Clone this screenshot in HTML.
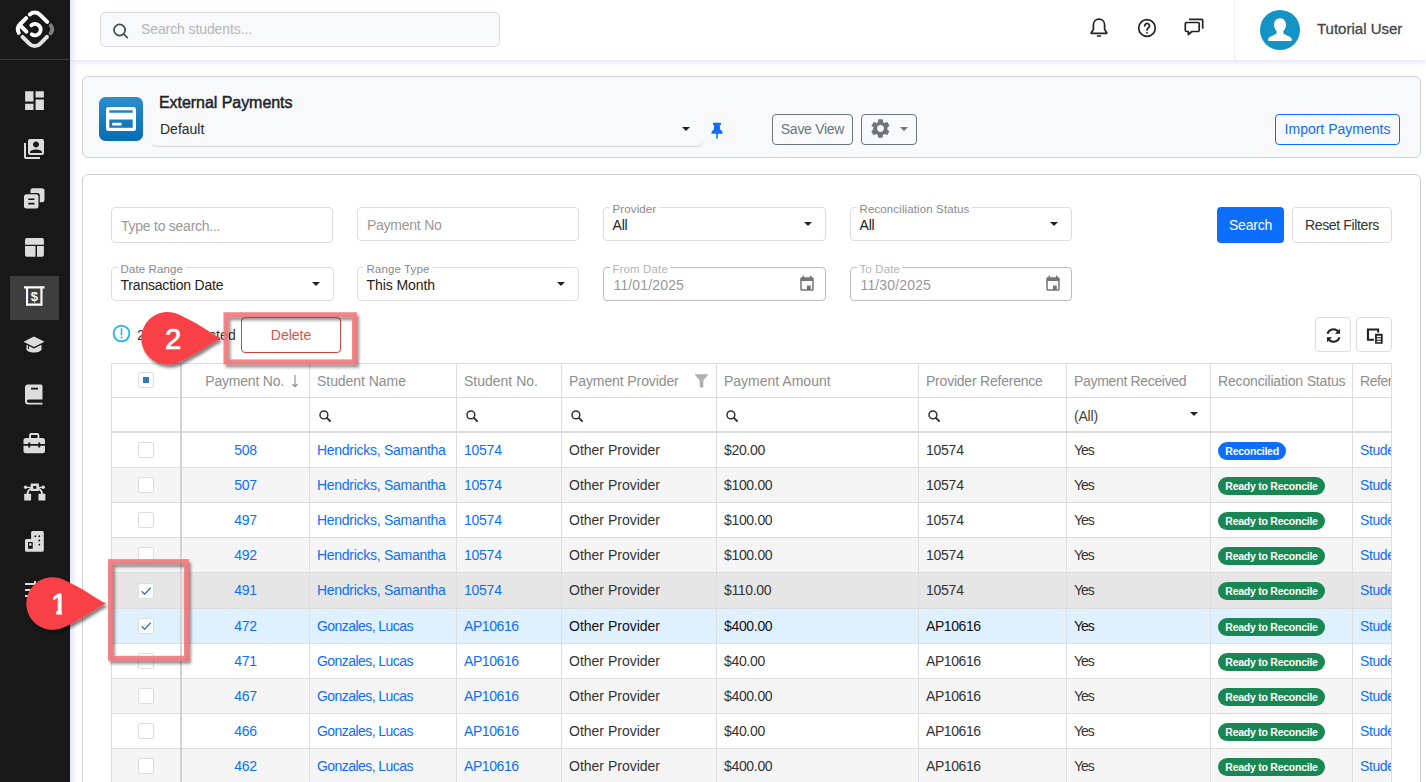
<!DOCTYPE html>
<html lang="en">
<head>
<meta charset="utf-8">
<title>External Payments</title>
<style>
*{box-sizing:border-box;margin:0;padding:0}
html,body{width:1426px;height:782px;overflow:hidden;background:#fff}
body{font-family:"Liberation Sans",sans-serif;font-size:14px;color:#333;position:relative}
.abs{position:absolute}
/* sidebar */
#side{position:absolute;left:0;top:0;width:70px;height:782px;background:#181818;z-index:5}
#side .div{position:absolute;left:0;top:59px;width:69px;height:1px;background:#3a3a3a}
#side .act{position:absolute;left:10px;top:276px;width:49px;height:44px;background:#3e3e3e}
#side svg{position:absolute;left:22px;width:24px;height:24px;fill:#dcdcdc}
/* topbar */
#top{position:absolute;left:70px;top:0;width:1356px;height:60px;background:#fff;box-shadow:0 1px 6px 1px rgba(150,150,240,.28)}
#sidesh{position:absolute;left:70px;top:0;width:7px;height:782px;background:linear-gradient(90deg,rgba(222,222,250,.8),rgba(255,255,255,0));z-index:4}
#search{position:absolute;left:100px;top:12px;width:400px;height:35px;border:1px solid #d9dbe0;border-radius:5px;background:#f8f9fb}
#search span{position:absolute;left:40px;top:8px;font-size:14px;letter-spacing:-.1px;color:#b4b6ba;white-space:nowrap}
.uname{position:absolute;left:1317px;top:20px;font-size:15px;color:#444;white-space:nowrap;-webkit-text-stroke:.3px #444}
/* cards */
.card{position:absolute;left:82px;width:1339px;border:1px solid #d0d0d0;border-radius:6px}
#c1{top:76px;height:82px;background:#f8f9fb}
#c2{top:174px;height:640px;background:#fff}
.btn{position:absolute;border:1px solid #6c757d;border-radius:4px;font-size:14px;text-align:center;white-space:nowrap}
.fld{position:absolute;border:1px solid #ddd;border-radius:4px;background:#fff;height:34px;width:223px}
.fld .lab{position:absolute;left:5.500px;top:-5.500px;padding:0 3px;background:#fff;font-size:11.500px;line-height:12px;color:#8a8a8a;white-space:nowrap;letter-spacing:.12px}
.fld .val{position:absolute;left:8.500px;top:8.500px;font-size:14px;line-height:16px;color:#222;white-space:nowrap;letter-spacing:-.2px}
.fld .ph{position:absolute;left:9px;top:8.500px;font-size:14px;line-height:16px;color:#999;white-space:nowrap;letter-spacing:-.25px}
.fld .arr{position:absolute;right:13px;top:14px;width:0;height:0;border-left:4px solid transparent;border-right:4px solid transparent;border-top:4px solid #222}
.ttl{font-size:16px;line-height:20px;color:#222;white-space:nowrap;-webkit-text-stroke:.45px #222;letter-spacing:-.05px}
.fld.dis{border-color:#bdbdbd}
.fld.dis .lab{color:#b5b5b5}
.fld.dis .val{color:#999;left:9.500px;letter-spacing:.15px}
.cal{position:absolute;right:9px;top:7px;width:18px;height:18px;fill:#757575}
.tb{width:36px;height:35px;border:1px solid #ddd;border-radius:4px;background:#fff}
.tb svg{position:absolute;width:21px;height:21px}
#grid{position:absolute;left:111px;top:363px;width:1281px;height:430px;border:1px solid #ddd;border-bottom:0;overflow:hidden;background:#fff;font-size:14px}
#grid .hr{position:absolute;left:0;top:0;width:100%;height:34px;border-bottom:1px solid #ddd}
#grid .fr{position:absolute;left:0;top:34px;width:100%;height:35px;border-bottom:2px solid #ddd}
#grid .h{position:absolute;top:8px;line-height:18px;color:#8e8e8e;white-space:nowrap}
#grid .h em{font-style:normal;color:#8a8a8a}
#grid .r{position:absolute;left:0;width:100%;border-bottom:1px solid #ddd;background:#fff}
#grid .r.alt{background:#f5f5f5}
#grid .r.hov{background:#e6e6e6}
#grid .r.sel{background:#dff0fe}
#grid .c{position:absolute;top:8px;line-height:18px;color:#333;white-space:nowrap}
#grid .r.hov .c{top:8px}#grid .r.hov .cb{top:9.500px}
#grid .r.sel .c{color:#111}
#grid .c.a,#grid .r.sel .c.a{color:#0d6efd}
#grid .cb{position:absolute;top:9px;width:16px;height:16px;border:1px solid #ddd;border-radius:2px;background:#fff}
#grid .cb svg{position:absolute;left:0;top:0;width:14px;height:14px}
#grid .hcb b{position:absolute;left:4px;top:4px;width:6px;height:6px;background:#337ab7}
#grid .vl{position:absolute;top:0;width:1px;height:100%;background:#ddd}
#grid .mg{position:absolute;top:11.500px;width:12px;height:12px;overflow:visible}
.bd{position:absolute;top:9px;height:18px;line-height:18px;border-radius:9px;color:#fff;font-size:10.500px;font-weight:bold;padding:0 7px;white-space:nowrap;letter-spacing:-.25px}
.bd.bl{background:#0d6efd}
.bd.gr{background:#198754}
</style>
</head>
<body>
<div id="side">
  <div class="div"></div>
  <div class="act"></div>
  <!-- logo -->
  <svg style="left:10px;top:5px;width:50px;height:50px;fill:none" viewBox="0 0 50 50">
    <g transform="translate(24.8 24.300) rotate(45)" stroke-linecap="round" fill="none" stroke-width="4">
      <path d="M-14 -7 A7.5 7.5 0 0 1 -6.5 -14 H3.6" stroke="#fff"/>
      <path d="M-14 -1.800 V6.500 A7.500 7.500 0 0 0 -8.800 13.800" stroke="#fff"/>
      <path d="M-13 7.600 H-4.300" stroke="#fff"/>
      <path d="M8.600 -14 A6 6 0 0 1 14 -8.400" stroke="#808080"/>
      <path d="M-3.400 14 H6.500 A7.500 7.500 0 0 0 14 6.500 V-3.200" stroke="#e2e2e2"/>
    </g>
    <path d="M21.400 20.200 A5.700 5.700 0 1 1 21.800 29.400" stroke="#fff" stroke-width="3.900" fill="none" stroke-linecap="round"/>
  </svg>
  <!-- dashboard -->
  <svg style="top:88px;left:21.900px;width:25px;height:25px" viewBox="0 0 24 24"><path d="M3 13h8V3H3v10zm0 8h8v-6H3v6zm10 0h8V11h-8v10zm0-18v6h8V3h-8z"/></svg>
  <!-- switch account -->
  <svg style="top:137px" viewBox="0 0 24 24"><path d="M4 6H2v14c0 1.1.9 2 2 2h14v-2H4V6zm16-4H8c-1.1 0-2 .9-2 2v12c0 1.1.9 2 2 2h12c1.1 0 2-.9 2-2V4c0-1.1-.9-2-2-2zm-6 2.5c1.66 0 3 1.34 3 3s-1.34 3-3 3-3-1.34-3-3 1.34-3 3-3zM20 16H8v-.57c0-.81.48-1.53 1.22-1.85 1.46-.63 3.08-.98 4.78-.98s3.32.35 4.78.98c.74.32 1.22 1.04 1.22 1.85V16z"/></svg>
  <!-- stacked docs -->
  <svg style="top:186px" viewBox="0 0 24 24"><path d="M10.900 2.200H20a2.500 2.500 0 0 1 2.500 2.500v9.100a2.500 2.500 0 0 1-2.500 2.500h-2.200V9.500a2.500 2.500 0 0 0-2.500-2.500H8.400V4.700a2.500 2.500 0 0 1 2.500-2.500z"/><path d="M4.500 8.300H14a2.500 2.500 0 0 1 2.500 2.500v9.100a2.500 2.500 0 0 1-2.500 2.500H4.500A2.500 2.500 0 0 1 2 19.900v-9.100a2.500 2.500 0 0 1 2.500-2.500zm1.800 4.200v1.600h6.200v-1.600H6.300zm0 4.200v1.700h6.200v-1.700H6.300z" fill-rule="evenodd"/></svg>
  <!-- layout -->
  <svg style="top:235px" viewBox="0 0 24 24"><path d="M4.800 3.100h15.300a1.800 1.800 0 0 1 1.800 1.800v4.800H3V4.900a1.800 1.800 0 0 1 1.800-1.800zM3 11h10.500v10.700H4.800A1.800 1.800 0 0 1 3 19.900V11zm12 0h6.900v8.900a1.800 1.800 0 0 1-1.800 1.800H15V11z"/></svg>
  <!-- payments (active) -->
  <svg style="top:284px;fill:#fff" viewBox="0 0 24 24"><path d="M2 2.300h20.500v2.100h-2V21.700H4V4.400H2V2.300zm4.100 2.100V19.600h12.300V4.400H6.100z" fill-rule="evenodd"/><text x="12.250" y="17" font-family="'Liberation Sans', sans-serif" font-weight="bold" font-size="13" text-anchor="middle" fill="#fff">$</text></svg>
  <!-- school -->
  <svg style="top:333px" viewBox="0 0 24 24"><path d="M12 3.5L1.5 8.8 12 14l10.5-5.2L12 3.500z"/><path d="M4.500 11.800v4.400c0 1.800 3.400 3.300 7.500 3.300s7.500-1.500 7.500-3.300v-4.400L12 15.600l-5-2.500v2.800h-1v-3.300l-1.500-.8z"/></svg>
  <!-- book -->
  <svg style="top:382px" viewBox="0 0 24 24"><path d="M6 2.500h13a1.500 1.500 0 0 1 1.500 1.500v13.500H6.500a1.600 1.600 0 0 0 0 3.200H20.500v1.800H6A3 3 0 0 1 3 19.500V5.500a3 3 0 0 1 3-3zm3 3.300v1.700h7V5.800H9z" fill-rule="evenodd"/></svg>
  <!-- toolbox -->
  <svg style="top:431px" viewBox="0 0 24 24"><path d="M9.300 2h5.900a2.200 2.200 0 0 1 2.200 2.200V7h3.100a2.500 2.500 0 0 1 2.500 2.500v3.600h-4.800v-1.700h-1.900v1.700H8.200v-1.700H6.300v1.700H1.500V9.500A2.500 2.500 0 0 1 4 7h3.100V4.200A2.200 2.200 0 0 1 9.300 2zm0 1.900a.3.300 0 0 0-.3.300V7h6.500V4.200a.3.300 0 0 0-.3-.3H9.300zM1.500 14.800h4.800v1.700h1.900v-1.700h8.100v1.700h1.900v-1.700h4.800v4.900a2.500 2.500 0 0 1-2.500 2.500H4a2.500 2.500 0 0 1-2.500-2.500v-4.900z" fill-rule="evenodd"/></svg>
  <!-- bezier -->
  <svg style="top:480px" viewBox="0 0 24 24"><path d="M8.700 3.500h8.200v7.600H8.700V3.500zm2.500 2.400v2.800h3.200V5.900h-3.200z" fill-rule="evenodd"/><circle cx="3.600" cy="7.300" r="1.700"/><circle cx="21.200" cy="7.300" r="1.700"/><path d="M3.600 6.700h5.500v1.200H3.600zM16.500 6.700h4.700v1.200h-4.700z"/><rect x="2.200" y="13.800" width="6.900" height="6.800" rx=".6"/><rect x="16.500" y="13.800" width="6.900" height="6.800" rx=".6"/><path d="M5.600 14.200c0-3 1.500-5 4.200-5.800M20 14.200c0-3-1.500-5-4.200-5.800" fill="none" stroke="#dcdcdc" stroke-width="1.900"/></svg>
  <!-- buildings -->
  <svg style="top:529px" viewBox="0 0 24 24"><path d="M10.600 2.100h9.700a1.500 1.500 0 0 1 1.500 1.500v17.700a1.500 1.500 0 0 1-1.500 1.500H4.500A1.500 1.500 0 0 1 3 21.300v-9.700a1.500 1.500 0 0 1 1.500-1.500h4.600V3.600a1.500 1.500 0 0 1 1.500-1.500z"/><g fill="#181818"><circle cx="13.300" cy="7.300" r=".95"/><circle cx="17.300" cy="7.300" r=".95"/><circle cx="17.300" cy="11.500" r=".95"/><circle cx="17.300" cy="15.600" r=".95"/><path d="M6 13h4.750v6.800H6V13zm1.100 1.200v2.500h2.400v-2.500H7.100z" fill-rule="evenodd"/></g></svg>
  <!-- last (mostly hidden) -->
  <svg style="top:578px" viewBox="0 0 24 24"><path d="M3 5h9V3h2v2h7v2h-7v2h-2V7H3V5zm0 6h18v2H3v-2zm0 6h6v-2h2v6H9v-2H3v-2zm10 0h8v2h-8v-2z"/></svg>
</div>
<div id="sidesh"></div>
<div id="top">
  <!-- bell -->
  <svg class="abs" style="left:1017px;top:15px;width:24px;height:24px" viewBox="0 0 24 24" fill="none" stroke="#222" stroke-width="1.700" stroke-linejoin="round" stroke-linecap="round"><path d="M12 4.200c-3.300 0-5.600 2.500-5.600 5.700v4.600L4.300 17.400v.9h15.400v-.9l-2.100-2.900V9.900c0-3.200-2.300-5.700-5.600-5.700z"/><path d="M10.600 21h2.800"/></svg>
  <!-- help -->
  <svg class="abs" style="left:1065px;top:15.500px;width:24px;height:24px" viewBox="0 0 24 24" fill="none" stroke="#222" stroke-width="1.700" stroke-linecap="round"><circle cx="12" cy="12" r="8.300"/><path d="M9.700 9.800a2.400 2.400 0 1 1 3.600 2.100c-.9.500-1.300 1-1.300 2"/><path d="M12 16.600v.2"/></svg>
  <!-- chat -->
  <svg class="abs" style="left:1112px;top:15px;width:24px;height:24px" viewBox="0 0 24 24" fill="none" stroke="#222" stroke-width="1.700" stroke-linejoin="round" stroke-linecap="round"><path d="M4.500 7.500h11.500a1.200 1.200 0 0 1 1.200 1.200v6.600a1.200 1.200 0 0 1-1.200 1.200H10l-3.700 3v-3H4.500a1.200 1.200 0 0 1-1.200-1.200V8.700a1.200 1.200 0 0 1 1.200-1.200z"/><path d="M7.800 4.300h11.700a1.200 1.200 0 0 1 1.200 1.200v7.500"/></svg>
  <div class="abs" style="left:1164px;top:0;width:1px;height:60px;background:#eee"></div>
  <!-- avatar -->
  <svg class="abs" style="left:1190px;top:10px;width:40px;height:40px" viewBox="0 0 40 40"><circle cx="20" cy="20" r="20" fill="#1494c5"/><path d="M20 8.200c3.700 0 6 2.800 6 6.600 0 2.500-1 4.900-2.600 6.200v1.600c0 1 .6 1.600 2.500 2.300 3.200 1.200 5.600 2.200 6 4.300.2 1.200-.4 1.800-1.500 1.800H9.600c-1.100 0-1.700-.6-1.500-1.800.4-2.100 2.800-3.100 6-4.300 1.900-.7 2.500-1.300 2.500-2.300V21c-1.600-1.300-2.600-3.700-2.600-6.200 0-3.800 2.300-6.600 6-6.600z" fill="#fff"/></svg>
</div>
<div id="search"><svg class="abs" style="left:10px;top:8px;width:20px;height:20px" viewBox="0 0 20 20" fill="none" stroke="#444b55" stroke-width="1.7" stroke-linecap="round"><circle cx="8.600" cy="9" r="5.600"/><path d="M12.800 13.200 L16.300 16.700"/></svg><span>Search students...</span></div>
<div class="uname">Tutorial User</div>

<div class="card" id="c1"></div>
<!-- header card content -->
<svg class="abs" style="left:99px;top:97px;width:44px;height:44px" viewBox="0 0 44 44"><defs><linearGradient id="tg" x1="0" y1="0" x2="0" y2="1"><stop offset="0" stop-color="#2b8ecb"/><stop offset="1" stop-color="#066cb3"/></linearGradient></defs><rect width="44" height="44" rx="6.500" fill="url(#tg)"/><path d="M9.500 10h25a2.500 2.500 0 0 1 2.500 2.500v19a2.500 2.500 0 0 1-2.500 2.500h-25A2.500 2.500 0 0 1 7 31.500v-19A2.500 2.500 0 0 1 9.500 10zm.8 3.200v2.600h23.400v-2.600H10.300zm0 9.300v8.300h23.400v-8.300H10.300zm2.900 3.200h9.400v2.700h-9.400v-2.700z" fill="#fff" fill-rule="evenodd"/></svg>
<div class="abs ttl" style="left:159px;top:93px">External Payments</div>
<div class="abs" style="left:160px;top:121px;font-size:14px;line-height:16px;color:#2a2a2a;white-space:nowrap">Default</div>
<div class="abs" style="left:151px;top:140px;width:552px;height:6.500px;border-bottom:1px solid #d4d6da;border-right:1px solid #e6e7ea;border-bottom-right-radius:6px;border-bottom-left-radius:6px"></div>
<div class="abs" style="left:681.500px;top:127px;width:0;height:0;border-left:4px solid transparent;border-right:4px solid transparent;border-top:4.500px solid #222"></div>
<!-- pin -->
<svg class="abs" style="left:711px;top:121.500px;width:12px;height:17.500px" viewBox="0 0 14 18" preserveAspectRatio="none"><path d="M3.300 .8h7.400a1 1 0 0 1 1 1v.5a1 1 0 0 1-1 1h-.5l.5 4.500c1.600.9 2.600 2.100 2.800 3.500.1.500-.3.900-.8.900H7.900v4.300L7 17.800l-.9-1.300v-4.300H1.300c-.5 0-.9-.4-.8-.9.200-1.400 1.200-2.600 2.800-3.500l.5-4.500h-.5a1 1 0 0 1-1-1v-.5a1 1 0 0 1 1-1z" fill="#0d6efd"/></svg>
<div class="btn" style="left:772px;top:114px;width:81px;height:31px;line-height:29px;color:#6c757d;letter-spacing:-.28px">Save View</div>
<div class="btn" style="left:861px;top:114px;width:56px;height:31px"></div>
<svg class="abs" style="left:869.200px;top:117.200px;width:23px;height:23px" viewBox="0 0 24 24"><path fill="#6c757d" fill-rule="evenodd" d="M19.140 12.940c.04-.3.060-.61.060-.94 0-.32-.02-.64-.07-.94l2.030-1.580a.49.49 0 0 0 .12-.61l-1.920-3.320a.488.488 0 0 0-.59-.22l-2.390.96c-.5-.38-1.030-.7-1.620-.94l-.36-2.540a.484.484 0 0 0-.48-.41h-3.840c-.24 0-.43.170-.47.410l-.36 2.540c-.59.240-1.130.57-1.620.94l-2.390-.96c-.22-.08-.47 0-.59.220L2.740 8.870c-.12.210-.8.470.12.610l2.030 1.580c-.5.300-.9.630-.9.940s.2.640.7.940l-2.030 1.580a.49.49 0 0 0-.12.610l1.920 3.320c.12.220.37.290.59.220l2.390-.96c.5.380 1.030.7 1.620.94l.36 2.540c.5.240.24.410.48.410h3.840c.24 0 .44-.17.470-.41l.36-2.540c.59-.24 1.130-.56 1.620-.94l2.390.96c.22.080.47 0 .59-.22l1.920-3.320c.12-.22.070-.47-.12-.61l-2.010-1.580zM12 15.600c-1.980 0-3.600-1.620-3.600-3.600s1.620-3.600 3.600-3.600 3.600 1.620 3.600 3.600-1.620 3.600-3.600 3.600z"/></svg>
<div class="abs" style="left:900px;top:126.500px;width:0;height:0;border-left:4px solid transparent;border-right:4px solid transparent;border-top:4.500px solid #6c757d"></div>
<div class="btn" style="left:1275px;top:114px;width:125px;height:31px;line-height:29px;color:#0d6efd;border-color:#0d6efd">Import Payments</div>
<div class="card" id="c2"></div>
<!-- filters -->
<div class="fld" style="left:111px;top:207px;height:36px;width:222px"><span class="ph" style="top:9.500px">Type to search...</span></div>
<div class="fld" style="left:357px;top:207px;width:222px"><span class="ph">Payment No</span></div>
<div class="fld" style="left:603px;top:207px"><span class="lab">Provider</span><span class="val">All</span><i class="arr"></i></div>
<div class="fld" style="left:850px;top:207px;width:222px"><span class="lab">Reconciliation Status</span><span class="val">All</span><i class="arr"></i></div>
<div class="abs" style="left:1217px;top:207px;width:67px;height:36px;border-radius:4px;background:#0d6efd;color:#fff;font-size:14px;line-height:36px;text-align:center;letter-spacing:-.2px">Search</div>
<div class="abs" style="left:1292px;top:207px;width:100px;height:36px;border-radius:4px;border:1px solid #ddd;background:#fff;color:#333;font-size:14px;line-height:34px;text-align:center;white-space:nowrap;letter-spacing:-.35px">Reset Filters</div>
<div class="fld" style="left:111px;top:267px"><span class="lab">Date Range</span><span class="val">Transaction Date</span><i class="arr"></i></div>
<div class="fld" style="left:357px;top:267px;width:222px"><span class="lab">Range Type</span><span class="val" style="letter-spacing:-.08px">This Month</span><i class="arr"></i></div>
<div class="fld dis" style="left:603px;top:267px"><span class="lab">From Date</span><span class="val">11/01/2025</span>
  <svg class="cal" viewBox="0 0 24 24"><path d="M19 4h-1V2h-2v2H8V2H6v2H5c-1.100 0-2 .9-2 2v14c0 1.100.9 2 2 2h14c1.100 0 2-.9 2-2V6c0-1.100-.9-2-2-2zm0 16H5V9h14v11zm-7-5h5v5h-5v-5z" transform="translate(0 -1)"/></svg></div>
<div class="fld dis" style="left:850px;top:267px;width:222px"><span class="lab">To Date</span><span class="val">11/30/2025</span>
  <svg class="cal" viewBox="0 0 24 24"><path d="M19 4h-1V2h-2v2H8V2H6v2H5c-1.100 0-2 .9-2 2v14c0 1.100.9 2 2 2h14c1.100 0 2-.9 2-2V6c0-1.100-.9-2-2-2zm0 16H5V9h14v11zm-7-5h5v5h-5v-5z" transform="translate(0 -1)"/></svg></div>
<!-- toolbar -->
<svg class="abs" style="left:112.200px;top:324.100px;width:19px;height:19px" viewBox="0 0 19 19"><circle cx="9.500" cy="9.500" r="7.900" fill="none" stroke="#1fb5e6" stroke-width="1.800"/><path d="M9.500 4.800v6" stroke="#1fb5e6" stroke-width="1.600" stroke-linecap="round"/><circle cx="9.500" cy="13.600" r="1" fill="#1fb5e6"/></svg>
<div class="abs" style="left:137px;top:326px;font-size:14px;line-height:18px;color:#333;white-space:nowrap;letter-spacing:.1px">2 rows selected</div>
<div class="abs" style="left:241px;top:317px;width:100px;height:36px;border:1px solid #c9433f;border-radius:4px;color:#d9534f;font-size:14px;line-height:34px;text-align:center;background:#fff">Delete</div>
<div class="abs tb" style="left:1315px;top:317px"><svg viewBox="0 0 18 18" style="left:6.500px;top:6.500px"><path d="M14.600 3.200v4.300h-4.300l1.700-1.700a4.300 4.300 0 0 0-7.200 1.900l-1.800-.5a6.200 6.200 0 0 1 10.300-2.700l1.300-1.300zM3.400 14.800v-4.300h4.300L6 12.200a4.300 4.300 0 0 0 7.200-1.900l1.800.5a6.200 6.200 0 0 1-10.300 2.700l-1.300 1.300z" fill="#222"/></svg></div>
<div class="abs tb" style="left:1356px;top:317px"><svg viewBox="0 0 18 18" style="left:6.500px;top:6.500px"><path d="M2.500 3h10.500v3.500h-1.800V4.800H4.300v6.900h4.200v1.800H2.500V3zm7 4.500h6.500V16H9.500V7.500zm1.500 1.700v1.200h3.500V9.200H11zm0 2.200v1.200h3.500v-1.200H11zm0 2.200v1.200h3.500v-1.200H11z" fill="#222" fill-rule="evenodd"/></svg></div>

<!-- grid -->
<div id="grid">
<div class="hr">
<i class="cb hcb" style="left:26px;top:8px"><b></b></i>
<span class="h" style="left:70px;width:127px;text-align:right;padding-right:25px;letter-spacing:-.2px">Payment No.</span><svg class="abs" style="left:179px;top:10px;width:8px;height:14px" viewBox="0 0 8 14"><path d="M4 1V12.500M1.300 9.800L4 12.600L6.700 9.800" fill="none" stroke="#8a8a8a" stroke-width="1.100"/></svg>
<span class="h" style="left:205px;letter-spacing:-0.05px">Student Name</span>
<span class="h" style="left:352px;letter-spacing:0px">Student No.</span>
<span class="h" style="left:457px;letter-spacing:-0.1px">Payment Provider</span>
<span class="h" style="left:612px;letter-spacing:0px">Payment Amount</span>
<span class="h" style="left:814px;letter-spacing:-0.22px">Provider Reference</span>
<span class="h" style="left:962px;letter-spacing:-0.33px">Payment Received</span>
<span class="h" style="left:1106px;letter-spacing:-0.16px">Reconciliation Status</span>
<span class="h" style="left:1248px;letter-spacing:-0.45px">Reference</span>
<svg class="abs" style="left:582.4px;top:10px;width:15px;height:14px" viewBox="0 0 15 14"><path d="M.5 .3h14L9.300 6.600V13.500H5.700V6.600L.5 .3z" fill="#b0b0b0"/></svg>
</div>
<div class="fr">
<svg class="mg" style="left:207px" viewBox="0 0 12 12"><circle cx="4.900" cy="4.900" r="3.900" fill="none" stroke="#333" stroke-width="1.500"/><path d="M7.900 7.900L11 11" stroke="#333" stroke-width="1.900" stroke-linecap="round"/></svg>
<svg class="mg" style="left:354px" viewBox="0 0 12 12"><circle cx="4.900" cy="4.900" r="3.900" fill="none" stroke="#333" stroke-width="1.500"/><path d="M7.900 7.900L11 11" stroke="#333" stroke-width="1.900" stroke-linecap="round"/></svg>
<svg class="mg" style="left:459px" viewBox="0 0 12 12"><circle cx="4.900" cy="4.900" r="3.900" fill="none" stroke="#333" stroke-width="1.500"/><path d="M7.900 7.900L11 11" stroke="#333" stroke-width="1.900" stroke-linecap="round"/></svg>
<svg class="mg" style="left:614px" viewBox="0 0 12 12"><circle cx="4.900" cy="4.900" r="3.900" fill="none" stroke="#333" stroke-width="1.500"/><path d="M7.900 7.900L11 11" stroke="#333" stroke-width="1.900" stroke-linecap="round"/></svg>
<svg class="mg" style="left:816px" viewBox="0 0 12 12"><circle cx="4.900" cy="4.900" r="3.900" fill="none" stroke="#333" stroke-width="1.500"/><path d="M7.900 7.900L11 11" stroke="#333" stroke-width="1.900" stroke-linecap="round"/></svg>
<span class="c" style="left:962px;top:9px;color:#444;letter-spacing:-.2px">(All)</span>
<i class="abs" style="left:1077.7px;top:14px;width:0;height:0;border-left:4px solid transparent;border-right:4px solid transparent;border-top:4px solid #222"></i>
</div>
<div class="r" style="top:69px;height:35px">
<i class="cb" style="left:26px"></i>
<span class="c a" style="left:70px;width:127px;text-align:center;letter-spacing:-.25px">508</span>
<span class="c a" style="left:205px;letter-spacing:-0.28px">Hendricks, Samantha</span>
<span class="c a" style="left:352px;letter-spacing:-0.25px">10574</span>
<span class="c" style="left:457px">Other Provider</span>
<span class="c" style="left:612px;letter-spacing:-.33px">$20.00</span>
<span class="c" style="left:814px;letter-spacing:-0.25px">10574</span>
<span class="c" style="left:962px;letter-spacing:-1.1px">Yes</span>
<span class="bd bl" style="left:1106.3px">Reconciled</span>
<span class="c a" style="left:1248px;letter-spacing:-.4px">Student Payment</span>
</div>
<div class="r alt" style="top:104px;height:35px">
<i class="cb" style="left:26px"></i>
<span class="c a" style="left:70px;width:127px;text-align:center;letter-spacing:-.25px">507</span>
<span class="c a" style="left:205px;letter-spacing:-0.28px">Hendricks, Samantha</span>
<span class="c a" style="left:352px;letter-spacing:-0.25px">10574</span>
<span class="c" style="left:457px">Other Provider</span>
<span class="c" style="left:612px;letter-spacing:-.33px">$100.00</span>
<span class="c" style="left:814px;letter-spacing:-0.25px">10574</span>
<span class="c" style="left:962px;letter-spacing:-1.1px">Yes</span>
<span class="bd gr" style="left:1106.3px">Ready to Reconcile</span>
<span class="c a" style="left:1248px;letter-spacing:-.4px">Student Payment</span>
</div>
<div class="r" style="top:139px;height:35px">
<i class="cb" style="left:26px"></i>
<span class="c a" style="left:70px;width:127px;text-align:center;letter-spacing:-.25px">497</span>
<span class="c a" style="left:205px;letter-spacing:-0.28px">Hendricks, Samantha</span>
<span class="c a" style="left:352px;letter-spacing:-0.25px">10574</span>
<span class="c" style="left:457px">Other Provider</span>
<span class="c" style="left:612px;letter-spacing:-.33px">$100.00</span>
<span class="c" style="left:814px;letter-spacing:-0.25px">10574</span>
<span class="c" style="left:962px;letter-spacing:-1.1px">Yes</span>
<span class="bd gr" style="left:1106.3px">Ready to Reconcile</span>
<span class="c a" style="left:1248px;letter-spacing:-.4px">Student Payment</span>
</div>
<div class="r alt" style="top:174px;height:35px">
<i class="cb" style="left:26px"></i>
<span class="c a" style="left:70px;width:127px;text-align:center;letter-spacing:-.25px">492</span>
<span class="c a" style="left:205px;letter-spacing:-0.28px">Hendricks, Samantha</span>
<span class="c a" style="left:352px;letter-spacing:-0.25px">10574</span>
<span class="c" style="left:457px">Other Provider</span>
<span class="c" style="left:612px;letter-spacing:-.33px">$100.00</span>
<span class="c" style="left:814px;letter-spacing:-0.25px">10574</span>
<span class="c" style="left:962px;letter-spacing:-1.1px">Yes</span>
<span class="bd gr" style="left:1106.3px">Ready to Reconcile</span>
<span class="c a" style="left:1248px;letter-spacing:-.4px">Student Payment</span>
</div>
<div class="r hov" style="top:209px;height:36px">
<i class="cb" style="left:26px"><svg viewBox="0 0 14 14"><path d="M2.600 7.300L5.600 10.200L11.600 3.800" fill="none" stroke="#337ab7" stroke-width="1.400"/></svg></i>
<span class="c a" style="left:70px;width:127px;text-align:center;letter-spacing:-.25px">491</span>
<span class="c a" style="left:205px;letter-spacing:-0.28px">Hendricks, Samantha</span>
<span class="c a" style="left:352px;letter-spacing:-0.25px">10574</span>
<span class="c" style="left:457px">Other Provider</span>
<span class="c" style="left:612px;letter-spacing:-.33px">$110.00</span>
<span class="c" style="left:814px;letter-spacing:-0.25px">10574</span>
<span class="c" style="left:962px;letter-spacing:-1.1px">Yes</span>
<span class="bd gr" style="left:1106.3px">Ready to Reconcile</span>
<span class="c a" style="left:1248px;letter-spacing:-.4px">Student Payment</span>
</div>
<div class="r alt sel" style="top:245px;height:35px">
<i class="cb" style="left:26px"><svg viewBox="0 0 14 14"><path d="M2.600 7.300L5.600 10.200L11.600 3.800" fill="none" stroke="#337ab7" stroke-width="1.400"/></svg></i>
<span class="c a" style="left:70px;width:127px;text-align:center;letter-spacing:-.25px">472</span>
<span class="c a" style="left:205px;letter-spacing:-0.56px">Gonzales, Lucas</span>
<span class="c a" style="left:352px;letter-spacing:-0.43px">AP10616</span>
<span class="c" style="left:457px">Other Provider</span>
<span class="c" style="left:612px;letter-spacing:-.33px">$400.00</span>
<span class="c" style="left:814px;letter-spacing:-0.43px">AP10616</span>
<span class="c" style="left:962px;letter-spacing:-1.1px">Yes</span>
<span class="bd gr" style="left:1106.3px">Ready to Reconcile</span>
<span class="c a" style="left:1248px;letter-spacing:-.4px">Student Payment</span>
</div>
<div class="r" style="top:280px;height:35px">
<i class="cb" style="left:26px"></i>
<span class="c a" style="left:70px;width:127px;text-align:center;letter-spacing:-.25px">471</span>
<span class="c a" style="left:205px;letter-spacing:-0.56px">Gonzales, Lucas</span>
<span class="c a" style="left:352px;letter-spacing:-0.43px">AP10616</span>
<span class="c" style="left:457px">Other Provider</span>
<span class="c" style="left:612px;letter-spacing:-.33px">$40.00</span>
<span class="c" style="left:814px;letter-spacing:-0.43px">AP10616</span>
<span class="c" style="left:962px;letter-spacing:-1.1px">Yes</span>
<span class="bd gr" style="left:1106.3px">Ready to Reconcile</span>
<span class="c a" style="left:1248px;letter-spacing:-.4px">Student Payment</span>
</div>
<div class="r alt" style="top:315px;height:35px">
<i class="cb" style="left:26px"></i>
<span class="c a" style="left:70px;width:127px;text-align:center;letter-spacing:-.25px">467</span>
<span class="c a" style="left:205px;letter-spacing:-0.56px">Gonzales, Lucas</span>
<span class="c a" style="left:352px;letter-spacing:-0.43px">AP10616</span>
<span class="c" style="left:457px">Other Provider</span>
<span class="c" style="left:612px;letter-spacing:-.33px">$400.00</span>
<span class="c" style="left:814px;letter-spacing:-0.43px">AP10616</span>
<span class="c" style="left:962px;letter-spacing:-1.1px">Yes</span>
<span class="bd gr" style="left:1106.3px">Ready to Reconcile</span>
<span class="c a" style="left:1248px;letter-spacing:-.4px">Student Payment</span>
</div>
<div class="r" style="top:350px;height:35px">
<i class="cb" style="left:26px"></i>
<span class="c a" style="left:70px;width:127px;text-align:center;letter-spacing:-.25px">466</span>
<span class="c a" style="left:205px;letter-spacing:-0.56px">Gonzales, Lucas</span>
<span class="c a" style="left:352px;letter-spacing:-0.43px">AP10616</span>
<span class="c" style="left:457px">Other Provider</span>
<span class="c" style="left:612px;letter-spacing:-.33px">$40.00</span>
<span class="c" style="left:814px;letter-spacing:-0.43px">AP10616</span>
<span class="c" style="left:962px;letter-spacing:-1.1px">Yes</span>
<span class="bd gr" style="left:1106.3px">Ready to Reconcile</span>
<span class="c a" style="left:1248px;letter-spacing:-.4px">Student Payment</span>
</div>
<div class="r alt" style="top:385px;height:35px">
<i class="cb" style="left:26px"></i>
<span class="c a" style="left:70px;width:127px;text-align:center;letter-spacing:-.25px">462</span>
<span class="c a" style="left:205px;letter-spacing:-0.56px">Gonzales, Lucas</span>
<span class="c a" style="left:352px;letter-spacing:-0.43px">AP10616</span>
<span class="c" style="left:457px">Other Provider</span>
<span class="c" style="left:612px;letter-spacing:-.33px">$400.00</span>
<span class="c" style="left:814px;letter-spacing:-0.43px">AP10616</span>
<span class="c" style="left:962px;letter-spacing:-1.1px">Yes</span>
<span class="bd gr" style="left:1106.3px">Ready to Reconcile</span>
<span class="c a" style="left:1248px;letter-spacing:-.4px">Student Payment</span>
</div>
<i class="vl" style="left:197px"></i>
<i class="vl" style="left:344px"></i>
<i class="vl" style="left:449px"></i>
<i class="vl" style="left:604px"></i>
<i class="vl" style="left:806px"></i>
<i class="vl" style="left:954px"></i>
<i class="vl" style="left:1098px"></i>
<i class="vl" style="left:1240px"></i>
<i class="vl" style="left:68px;width:2px;background:#d3d3d3"></i>
</div>
<!-- annotations -->
<svg class="abs" style="left:0;top:0;width:1426px;height:782px;pointer-events:none;z-index:10" viewBox="0 0 1426 782">
  <defs>
    <filter id="sh" x="-20%" y="-20%" width="150%" height="150%"><feGaussianBlur in="SourceAlpha" stdDeviation="1.800"/><feOffset dx="1.500" dy="3"/><feComponentTransfer><feFuncA type="linear" slope=".5"/></feComponentTransfer><feMerge><feMergeNode/><feMergeNode in="SourceGraphic"/></feMerge></filter>
  <clipPath id="c1f"><rect x="40" y="585" width="40" height="25.300"/><rect x="56.300" y="610" width="5.600" height="6"/></clipPath>
  </defs>
  <g filter="url(#sh)">
    <rect x="110.500" y="561.600" width="76" height="96.700" fill="none" stroke="#f07679" stroke-opacity=".86" stroke-width="5"/>
    <rect x="226" y="314.700" width="128.500" height="47.200" fill="none" stroke="#f07679" stroke-opacity=".86" stroke-width="5"/>
  </g>
  <g filter="url(#sh)">
    <path d="M63.71 579.66 C89.09 591.50 91.72 596.49 106.10 603.50 C91.72 610.51 89.09 615.50 63.71 627.34 A26.3 26.3 0 1 1 63.71 579.66Z" fill="#fa4146"/>
    <path d="M178.71 314.46 C204.09 326.30 206.72 331.29 221.10 338.30 C206.72 345.31 204.09 350.30 178.71 362.14 A26.3 26.3 0 1 1 178.71 314.46Z" fill="#fa4146"/>
  </g>
  <text x="59.200" y="614" font-family="'Liberation Sans', sans-serif" font-size="29.500" fill="#fff" stroke="#fff" stroke-width=".9" text-anchor="middle" clip-path="url(#c1f)">1</text>
  <text x="173.200" y="349" font-family="'Liberation Sans', sans-serif" font-size="29.500" fill="#fff" stroke="#fff" stroke-width=".7" text-anchor="middle">2</text>
</svg>
</body>
</html>
